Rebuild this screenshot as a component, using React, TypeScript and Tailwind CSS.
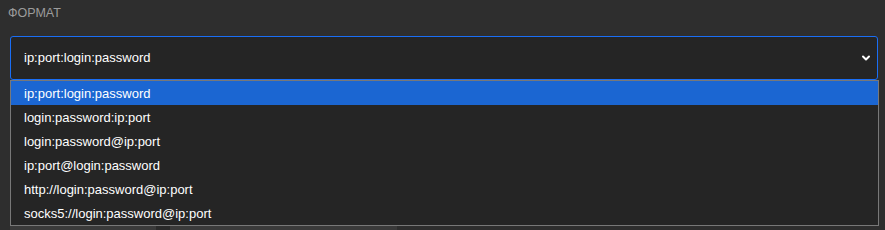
import { ChevronDown } from "lucide-react";

const formats = [
    "ip:port:login:password",
    "login:password:ip:port",
    "login:password@ip:port",
    "ip:port@login:password",
    "http://login:password@ip:port",
    "socks5://login:password@ip:port",
];

export default function App() {
    const selected = 0;

    return (
        <div className="h-[230px] w-[885px] overflow-hidden bg-[#2e2e2e] font-['Liberation_Sans',Arial,sans-serif]">
            {/* Label */}
            <div className="ml-2 pt-[6px] text-[12.5px] leading-[14px] text-[#9c9c9c] uppercase">
                Формат
            </div>

            {/* Select with open list */}
            <div className="relative ml-[10px] mr-[7px] mt-4">
                <div className="flex h-[44px] items-center justify-between rounded-[3px] border border-[#1a6ef5] bg-[#252525] pl-[13px] pr-[5px] text-[13px] text-white">
                    <span>{formats[selected]}</span>
                    <ChevronDown className="h-[12px] w-[12px] text-white" strokeWidth={4} />
                </div>

                <ul className="absolute left-0 -right-px top-full z-10 border border-[#787878] bg-[#252525]">
                    {formats.map((f, i) => (
                        <li
                            key={f}
                            className={
                                i === selected
                                    ? "flex h-6 items-center bg-[#1b66d2] pl-[13px] pt-px text-[13px] text-white"
                                    : "flex h-6 items-center pl-[13px] pt-px text-[13px] text-white"
                            }
                        >
                            {f}
                        </li>
                    ))}
                </ul>
            </div>

            {/* Fields behind the list */}
            <div className="ml-[10px] mt-[4px] flex">
                <div className="h-[160px] w-[146px] bg-[#3a3a3a]" />
                <div className="h-[160px] w-[14px] bg-[#2a2a2a]" />
                <div className="h-[160px] w-[227px] bg-[#3a3a3a]" />
            </div>
        </div>
    );
}
